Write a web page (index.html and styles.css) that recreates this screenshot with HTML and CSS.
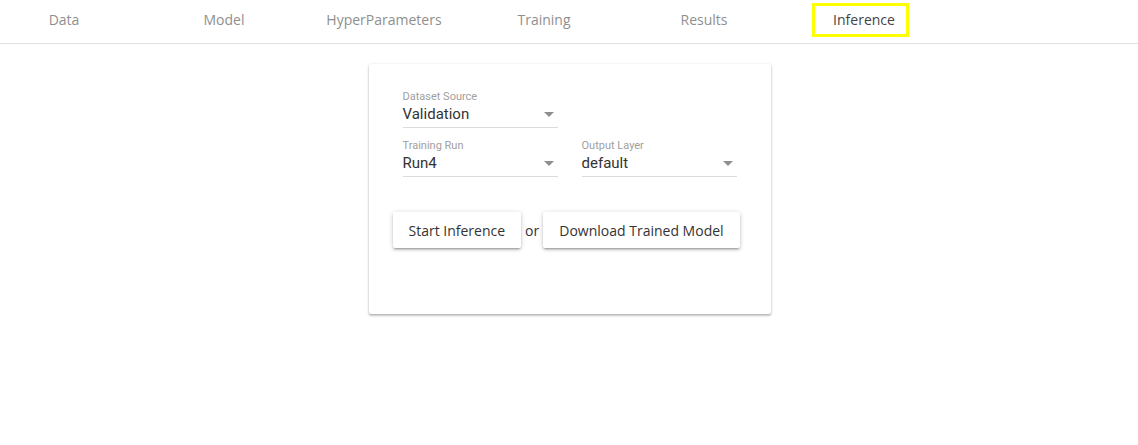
FILE: index.html
```html
<!DOCTYPE html>
<html>
<head>
<meta charset="utf-8">
<link rel="stylesheet" href="styles.css">
</head>
<body>
<header class="tabs">
  <div class="tab">Data</div>
  <div class="tab">Model</div>
  <div class="tab">HyperParameters</div>
  <div class="tab">Training</div>
  <div class="tab">Results</div>
  <div class="tab active"><span class="hl">Inference</span></div>
</header>
<main class="main">
  <section class="card">
    <div class="row">
      <div class="field">
        <div class="label">Dataset Source</div>
        <div class="select"><span class="value">Validation</span><span class="arrow"></span></div>
      </div>
    </div>
    <div class="row">
      <div class="field">
        <div class="label">Training Run</div>
        <div class="select"><span class="value">Run4</span><span class="arrow"></span></div>
      </div>
      <div class="field">
        <div class="label">Output Layer</div>
        <div class="select"><span class="value">default</span><span class="arrow"></span></div>
      </div>
    </div>
    <div class="actions">
      <button class="btn">Start Inference</button>
      <span class="or">or</span>
      <button class="btn">Download Trained Model</button>
    </div>
  </section>
</main>
</body>
</html>
```
FILE: styles.css
```css
html, body {
  margin: 0;
  padding: 0;
  background: #fff;
}
body {
  font-family: "Open Sans", "Liberation Sans", sans-serif;
  min-height: 445px;
}
.tabs {
  display: flex;
  height: 43px;
  border-bottom: 1px solid #e0e0e0;
  margin-left: -16px;
}
.tab {
  width: 160px;
  display: flex;
  align-items: center;
  justify-content: center;
  font-size: 14px;
  color: #8f8f8f;
  padding-bottom: 4px;
  box-sizing: border-box;
}
.tab.active {
  color: #444;
}
.hl {
  border: 3px solid #ffff00;
  padding: 4px 11px 5px 18px;
  margin-left: -7px;
}
.main {
  display: flex;
  justify-content: center;
  align-items: flex-start;
  padding: 20px 0 40px;
}
.card {
  width: 402px;
  height: 250px;
  box-sizing: border-box;
  padding: 26px 24px 0 24px;
  margin-left: 1px;
  background: #fff;
  box-shadow: 0 1px 3px rgba(0,0,0,0.22), 0 2px 2px rgba(0,0,0,0.14), 0 0 1px rgba(0,0,0,0.08);
  border-radius: 2px;
}
.row {
  display: flex;
  gap: 24px;
  padding-left: 10px;
  margin-bottom: 11px;
}
.field {
  width: 155px;
  font-family: Roboto, "Liberation Sans", sans-serif;
}
.label {
  font-size: 11px;
  line-height: 14px;
  color: #a0a0a0;
}
.select {
  display: flex;
  align-items: center;
  justify-content: space-between;
  height: 20px;
  padding-bottom: 3px;
  border-bottom: 1px solid #dcdcdc;
}
.value {
  font-size: 15px;
  color: #333;
}
.arrow {
  width: 0;
  height: 0;
  border-left: 5px solid transparent;
  border-right: 5px solid transparent;
  border-top: 5px solid #8f8f8f;
  margin-right: 4px;
}
.actions {
  display: flex;
  align-items: center;
  gap: 4px;
  margin-top: 35px;
}
.btn {
  height: 36px;
  padding: 0 16px;
  border: none;
  background: #fff;
  font-family: "Open Sans", "Liberation Sans", sans-serif;
  font-size: 14px;
  color: #333;
  border-radius: 2px;
  box-shadow: 0 1px 5px rgba(0,0,0,0.2), 0 2px 2px rgba(0,0,0,0.14), 0 3px 1px -2px rgba(0,0,0,0.12);
}
.or {
  font-size: 14px;
  color: #333;
}
```
